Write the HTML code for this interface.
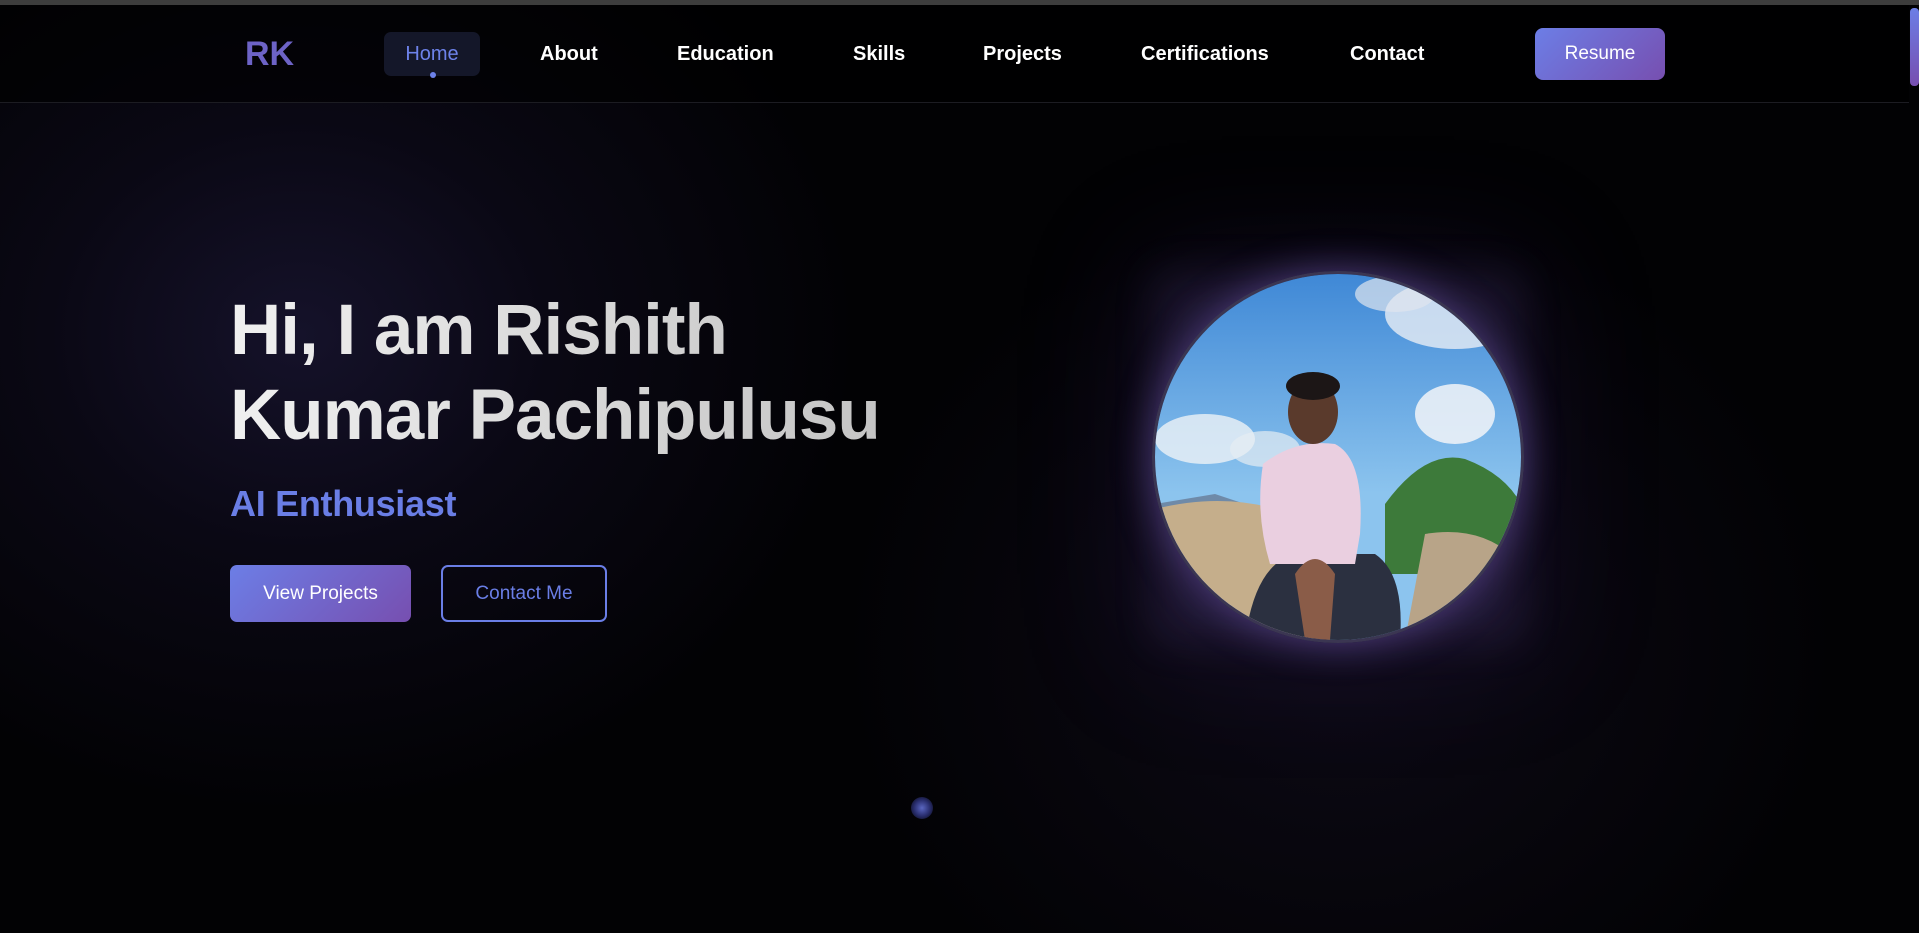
<!DOCTYPE html>
<html><head><meta charset="utf-8"><style>
*{margin:0;padding:0;box-sizing:border-box}
html,body{width:1919px;height:933px;overflow:hidden;background:#000;font-family:"Liberation Sans",Arial,sans-serif}
.top{position:absolute;left:0;top:0;width:1919px;height:5px;background:#3d3d3d}
.bg{position:absolute;inset:5px 0 0 0;background:radial-gradient(ellipse 560px 480px at 300px 330px,#15122a 0%,#0a0814 45%,rgba(0,0,0,0) 100%),radial-gradient(ellipse 500px 450px at 1340px 640px,#0d0a16 0%,rgba(0,0,0,0) 100%),#020204}
nav{position:absolute;left:0;top:5px;width:1909px;height:98px;border-bottom:1px solid #1c1c22;background:rgba(0,0,0,.6)}
.logo{position:absolute;left:245px;top:30px;font-size:34px;font-weight:bold;color:#6d63c6}
.ni{position:absolute;top:38px;font-size:20px;font-weight:bold;color:#fff}
.home{position:absolute;left:384px;top:27px;width:96px;height:44px;border-radius:7px;background:#141729}
.home span{position:absolute;left:0;right:0;top:11px;text-align:center;font-size:20px;color:#6d82ea}
.dot{position:absolute;left:46px;top:40px;width:6px;height:6px;border-radius:50%;background:#6d82ea}
.res{position:absolute;left:1535px;top:23px;width:130px;height:52px;border-radius:8px;background:linear-gradient(135deg,#6c7ee6,#774fb0);color:#fff;font-size:19px;text-align:center;line-height:52px}
.sb{position:absolute;left:1910px;top:8px;width:9px;height:78px;border-radius:4px;background:linear-gradient(#6c7ee6,#774fb0)}
h1{position:absolute;left:230px;top:288px;font-size:71px;line-height:85px;font-weight:bold;background:linear-gradient(90deg,#f0f0f0,#c4c4c4);-webkit-background-clip:text;color:transparent;letter-spacing:-1px}
.sub{position:absolute;left:230px;top:483px;font-size:36px;font-weight:bold;color:#6a7ee6;letter-spacing:-.3px}
.b1{position:absolute;left:230px;top:565px;width:181px;height:57px;border-radius:7px;background:linear-gradient(135deg,#6c7ee6,#774fb0);color:#fff;font-size:19px;text-align:center;line-height:57px}
.b2{position:absolute;left:441px;top:565px;width:166px;height:57px;border-radius:7px;border:2px solid #6a7ee6;color:#6a7ee6;font-size:19px;text-align:center;line-height:53px}
.glow{position:absolute;left:1338px;top:457px;width:0;height:0;box-shadow:0 0 120px 200px rgba(80,50,140,.16),0 0 40px 185px rgba(150,120,220,.12)}
.circ{position:absolute;left:1152px;top:271px;width:372px;height:372px;border-radius:50%;border:3px solid #3b3652;overflow:hidden;box-shadow:0 0 40px rgba(140,110,220,.45)}
.sdot{position:absolute;left:911px;top:797px;width:22px;height:22px;border-radius:50%;background:radial-gradient(#5a66c0 0%,#2a2f70 50%,rgba(0,0,0,0) 100%)}
</style></head><body>
<div class="top"></div><div class="bg"></div>
<nav>
<div class="logo">RK</div>
<div class="home"><span>Home</span><div class="dot"></div></div>
<div class="ni" style="left:540px">About</div>
<div class="ni" style="left:677px">Education</div>
<div class="ni" style="left:853px">Skills</div>
<div class="ni" style="left:983px">Projects</div>
<div class="ni" style="left:1141px">Certifications</div>
<div class="ni" style="left:1350px">Contact</div>
<div class="res">Resume</div>
</nav>
<div class="sb"></div>
<h1>Hi, I am Rishith<br>Kumar Pachipulusu</h1>
<div class="sub">AI Enthusiast</div>
<div class="b1">View Projects</div>
<div class="b2">Contact Me</div>
<div class="glow"></div>
<div class="circ">
<svg width="366" height="366" viewBox="0 0 366 366">
<defs><linearGradient id="sky" x1="0" y1="0" x2="0" y2="1"><stop offset="0" stop-color="#3f88d6"/><stop offset=".6" stop-color="#8cc4ee"/></linearGradient></defs>
<rect width="366" height="366" fill="url(#sky)"/>
<ellipse cx="300" cy="40" rx="70" ry="35" fill="#e8eef5" opacity=".8"/>
<ellipse cx="240" cy="20" rx="40" ry="18" fill="#dfe6ee" opacity=".7"/>
<ellipse cx="300" cy="140" rx="40" ry="30" fill="#f2f5f8" opacity=".85"/>
<ellipse cx="50" cy="165" rx="50" ry="25" fill="#eef2f6" opacity=".8"/>
<ellipse cx="110" cy="175" rx="35" ry="18" fill="#e6ecf2" opacity=".7"/>
<path d="M230 230 Q270 175 310 185 Q350 200 366 230 L366 300 L230 300Z" fill="#3d7a3a"/>
<path d="M0 230 L60 220 L120 240 L110 300 L0 300Z" fill="#6f8aa8"/>
<path d="M0 235 Q80 215 150 245 L160 366 L0 366Z" fill="#c5ae8b"/>
<path d="M270 260 Q330 250 366 290 L366 366 L250 366Z" fill="#b8a488"/>
<path d="M90 366 Q100 290 140 280 L220 280 Q250 300 245 366Z" fill="#2b3040"/>
<path d="M108 190 Q140 165 180 170 Q210 185 205 260 L200 290 L115 290 Q100 240 108 190Z" fill="#eacfe0"/>
<ellipse cx="158" cy="138" rx="25" ry="32" fill="#5a3a2c"/>
<ellipse cx="158" cy="112" rx="27" ry="14" fill="#1c1616"/>
<path d="M140 300 Q160 270 180 300 L175 366 L150 366Z" fill="#8a5c48"/>
</svg>
</div>
<div class="sdot"></div>
</body></html>
